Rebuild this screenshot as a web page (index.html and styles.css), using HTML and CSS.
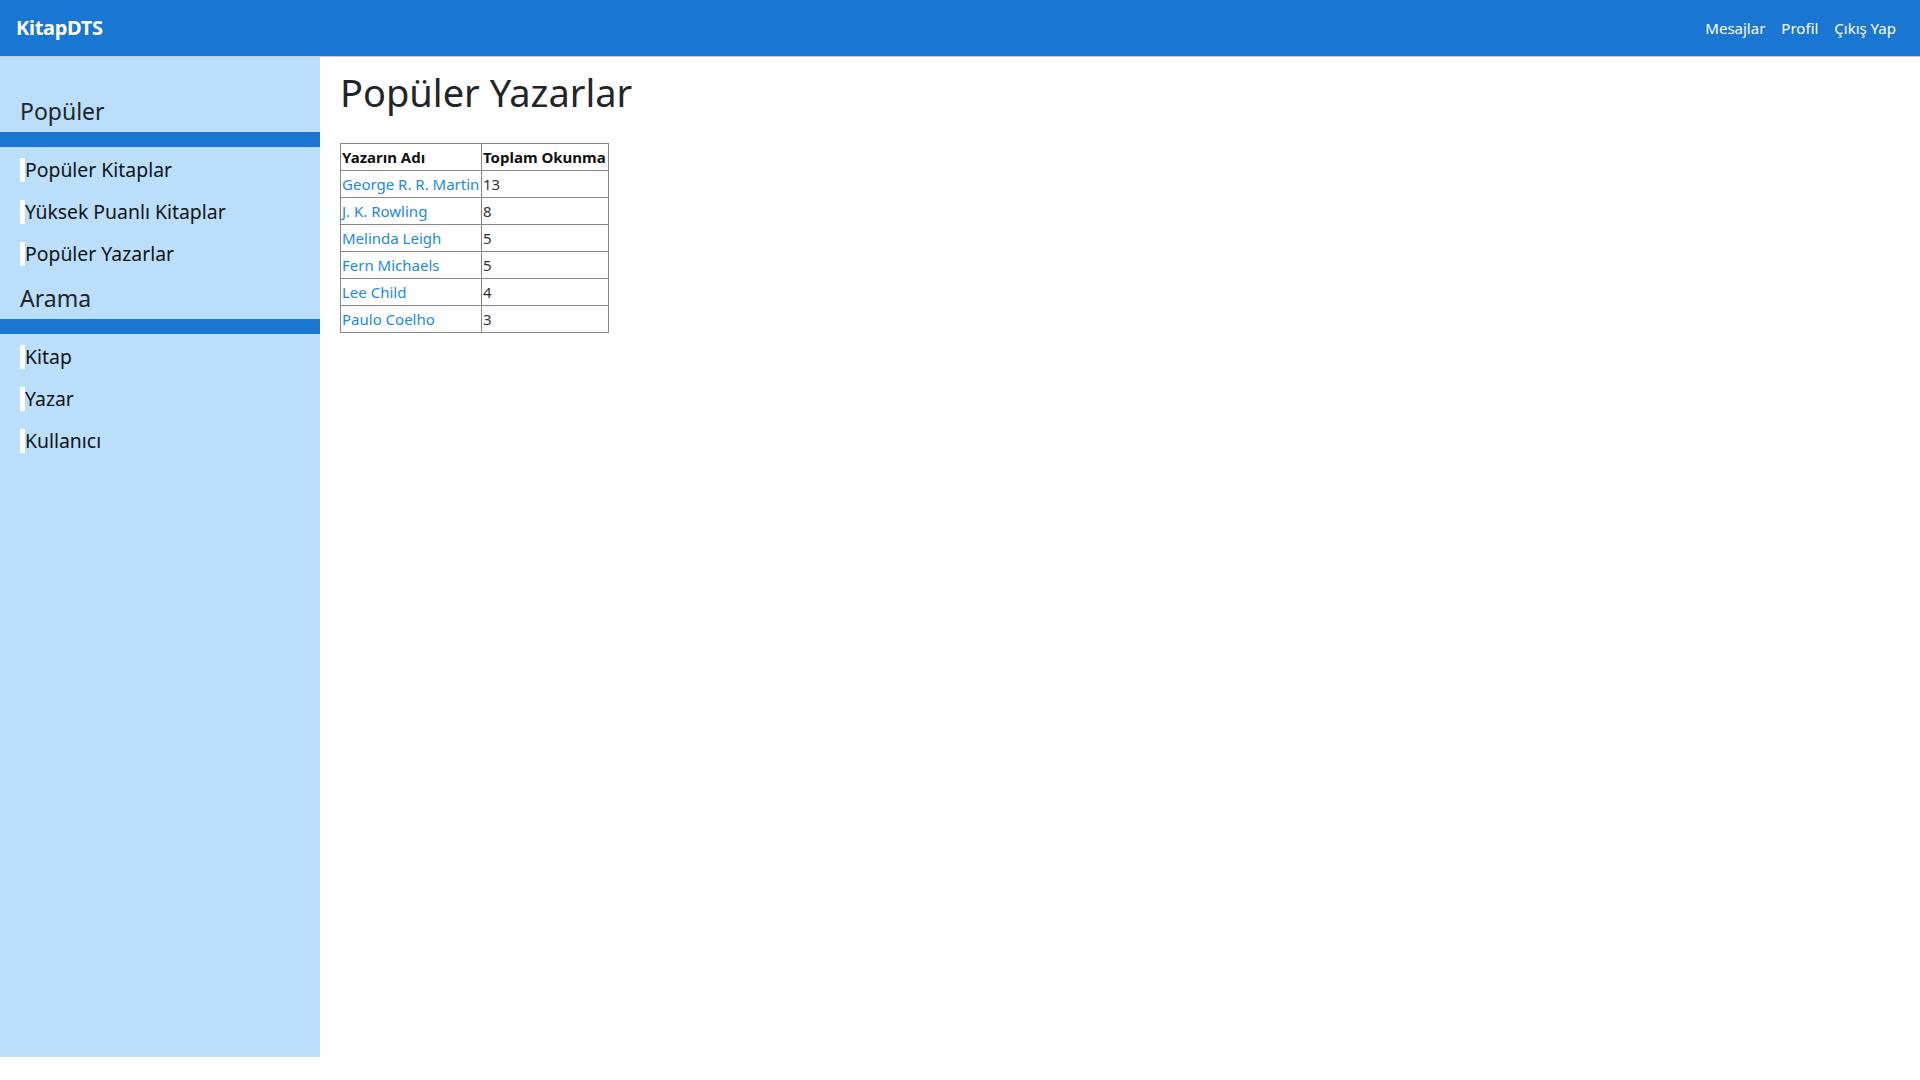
FILE: index.html
```html
<!DOCTYPE html>
<html lang="tr">
<head>
<meta charset="utf-8">
<title>KitapDTS - Popüler Yazarlar</title>
<link rel="stylesheet" href="styles.css">
</head>
<body>
<nav class="navbar">
  <a class="brand" href="#">KitapDTS</a>
  <ul class="nav-links">
    <li><a href="#">Mesajlar</a></li>
    <li><a href="#">Profil</a></li>
    <li><a href="#">Çıkış Yap</a></li>
  </ul>
</nav>
<div class="layout">
  <aside class="sidebar">
    <h4 class="side-title">Popüler</h4>
    <div class="side-bar"></div>
    <a class="side-link" href="#">Popüler Kitaplar</a>
    <a class="side-link" href="#">Yüksek Puanlı Kitaplar</a>
    <a class="side-link" href="#">Popüler Yazarlar</a>
    <h4 class="side-title">Arama</h4>
    <div class="side-bar"></div>
    <a class="side-link" href="#">Kitap</a>
    <a class="side-link" href="#">Yazar</a>
    <a class="side-link" href="#">Kullanıcı</a>
  </aside>
  <main class="content">
    <h1 class="page-title">Popüler Yazarlar</h1>
    <table class="data-table">
      <thead>
        <tr><th class="col-name">Yazarın Adı</th><th class="col-count">Toplam Okunma</th></tr>
      </thead>
      <tbody>
        <tr><td><a href="#">George R. R. Martin</a></td><td>13</td></tr>
        <tr><td><a href="#">J. K. Rowling</a></td><td>8</td></tr>
        <tr><td><a href="#">Melinda Leigh</a></td><td>5</td></tr>
        <tr><td><a href="#">Fern Michaels</a></td><td>5</td></tr>
        <tr><td><a href="#">Lee Child</a></td><td>4</td></tr>
        <tr><td><a href="#">Paulo Coelho</a></td><td>3</td></tr>
      </tbody>
    </table>
  </main>
</div>
</body>
</html>
```
FILE: styles.css
```css
* { box-sizing: border-box; }
html, body {
  margin: 0;
  padding: 0;
  background: #ffffff;
}
body {
  font-family: "Noto Sans", "Open Sans", sans-serif;
  font-size: 16px;
  line-height: 1.5;
  color: #212529;
}
a { text-decoration: none; }

.navbar {
  height: 57px;
  background: #1976d2;
  border-bottom: 1px solid #c9ccd1;
  display: flex;
  align-items: center;
  justify-content: space-between;
  padding: 0 16px;
}
.brand {
  color: #ffffff;
  font-size: 20px;
  font-weight: 700;
  line-height: 30px;
  letter-spacing: -0.3px;
}
.nav-links {
  list-style: none;
  margin: 0;
  padding: 0;
  display: flex;
}
.nav-links a {
  display: block;
  color: #ffffff;
  padding: 0 8px;
  font-size: 15px;
  line-height: 24px;
}

.layout {
  display: flex;
  align-items: flex-start;
}
.sidebar {
  width: 320px;
  height: 1000px;
  flex: none;
  background: #bbdefb;
  padding-top: 40px;
}
.side-title {
  margin: 0 0 6px 0;
  padding-left: 20px;
  font-size: 23px;
  font-weight: 400;
  line-height: 28.8px;
  color: #212529;
}
.side-bar {
  height: 15px;
  background: #1976d2;
  margin-bottom: 11px;
}
.side-link {
  display: block;
  margin: 0 0 18px 20px;
  border-left: 5px solid #ffffff;
  font-size: 19.4px;
  line-height: 24px;
  color: #111417;
}

.content {
  flex: 1;
  padding-left: 20px;
}
.page-title {
  margin: 11px 0 27px 0;
  font-size: 38px;
  font-weight: 400;
  line-height: 48px;
  color: #212529;
}
.data-table {
  border-collapse: collapse;
  border: 1px solid #888888;
  font-size: 15px;
  line-height: 24px;
}
.data-table th,
.data-table td {
  border: 1px solid #888888;
  padding: 1px;
  text-align: left;
  white-space: nowrap;
}
.data-table th { font-weight: 700; color: #111; }
.data-table td { color: #333; }
.data-table a { color: #1e88e5; }
.col-name { width: 141px; }
.col-count { width: 127px; }
```
